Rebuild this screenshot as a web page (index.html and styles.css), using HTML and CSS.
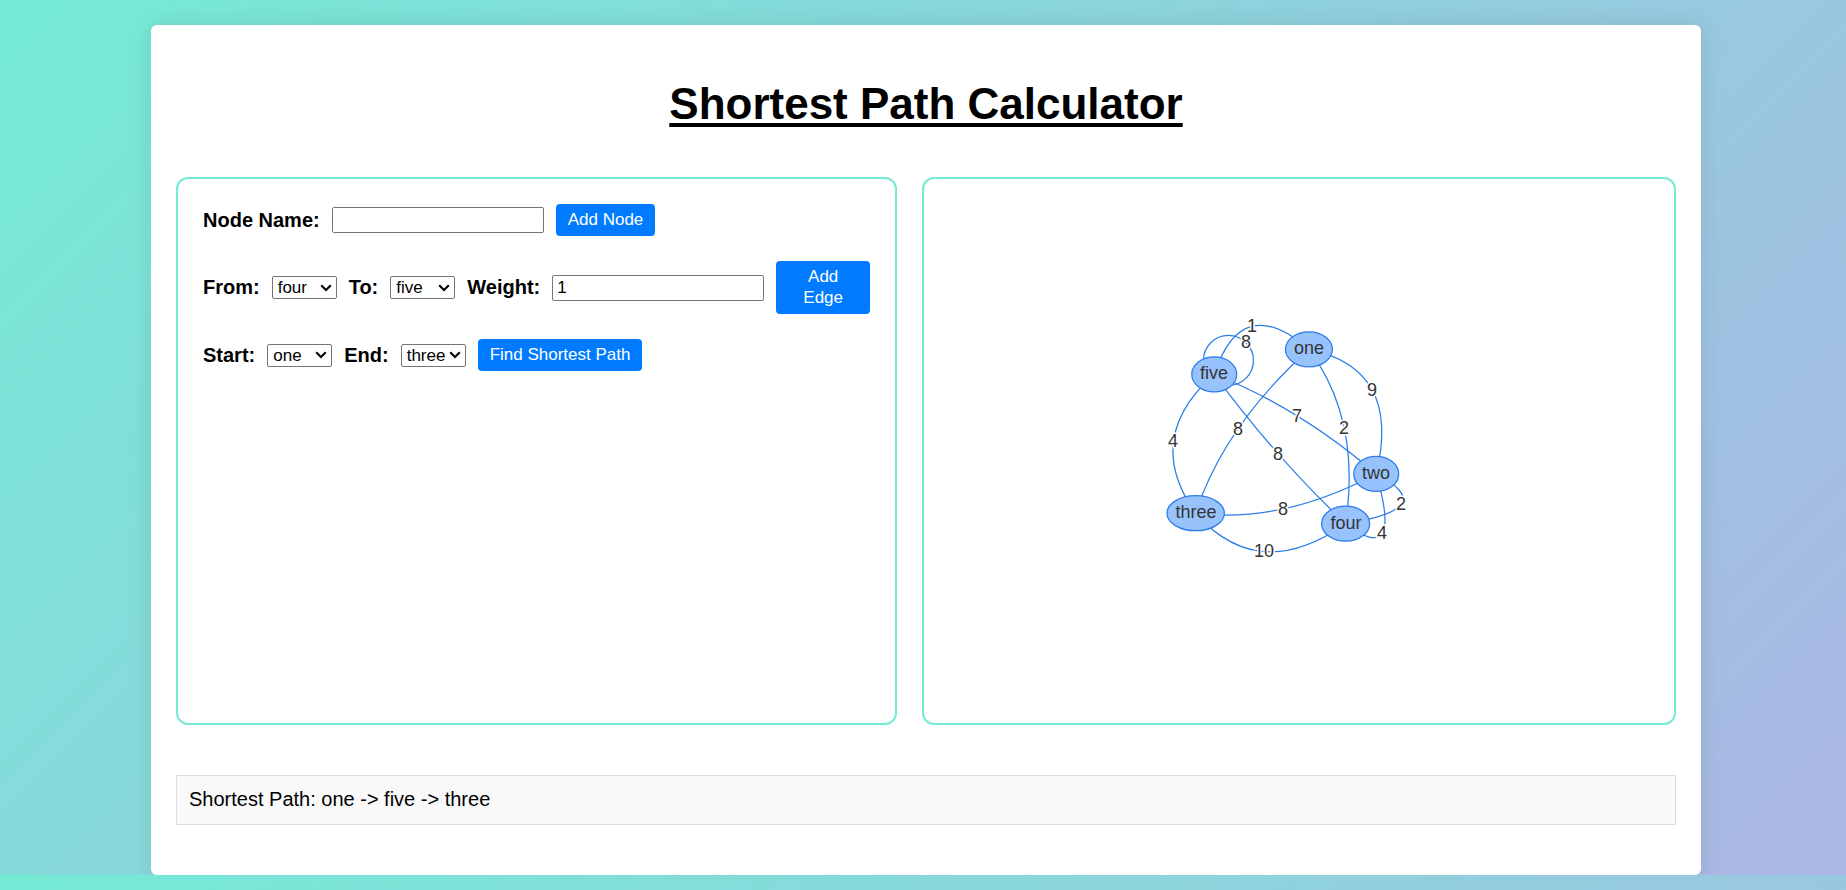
FILE: index.html
```html
<!DOCTYPE html>
<html lang="en">
<head>
<meta charset="utf-8">
<title>Shortest Path Calculator</title>
<link rel="stylesheet" href="styles.css">
</head>
<body>
<main class="container">
  <h1 class="title">Shortest Path Calculator</h1>
  <div class="panels">
    <section class="panel controls">
      <div class="row">
        <label for="node-name">Node Name:</label>
        <input class="field" type="text" id="node-name">
        <button class="btn" type="button">Add Node</button>
      </div>
      <div class="row">
        <label for="from">From:</label>
        <select class="pick" id="from"><option>one</option><option>two</option><option>three</option><option selected>four</option><option>five</option></select>
        <label for="to">To:</label>
        <select class="pick" id="to"><option>one</option><option>two</option><option>three</option><option>four</option><option selected>five</option></select>
        <label for="weight">Weight:</label>
        <input class="field" type="number" id="weight" value="1">
        <button class="btn" type="button">Add Edge</button>
      </div>
      <div class="row">
        <label for="start">Start:</label>
        <select class="pick" id="start"><option selected>one</option><option>two</option><option>three</option><option>four</option><option>five</option></select>
        <label for="end">End:</label>
        <select class="pick" id="end"><option>one</option><option>two</option><option selected>three</option><option>four</option><option>five</option></select>
        <button class="btn" type="button">Find Shortest Path</button>
      </div>
    </section>
    <section class="panel">
      <svg class="graph" viewBox="-226 -121 750 544" role="img" aria-label="Weighted graph">
        <g class="edges">
          <path d="M64.3 74.3Q91.7 -9 159 49.3"/>
          <path d="M159 49.3Q252 68.3 226.3 174"/>
          <path d="M159 49.3Q211.3 119.5 195.7 223.7"/>
          <path d="M159 49.3Q73.7 126.7 45.7 213.3"/>
          <path d="M64.3 74.3Q149.3 107.8 226.3 174"/>
          <path d="M64.3 74.3Q126.7 159 195.7 223.7"/>
          <path d="M64.3 74.3Q-7.7 138 45.7 213.3"/>
          <path d="M45.7 213.3Q130.7 224.3 226.3 174"/>
          <path d="M45.7 213.3Q108.7 284.8 195.7 223.7"/>
          <path d="M226.3 174Q292.3 208.5 195.7 223.7"/>
          <path d="M226.3 174Q253.7 267.8 195.7 223.7"/>
          <circle cx="78.5" cy="60.5" r="25"/>
        </g>
        <g class="nodes">
          <ellipse cx="159" cy="49.3" rx="23.5" ry="17.5"/>
          <ellipse cx="226.3" cy="174" rx="22.5" ry="17.5"/>
          <ellipse cx="45.7" cy="213.3" rx="28.7" ry="17.5"/>
          <ellipse cx="195.7" cy="223.7" rx="24" ry="17.5"/>
          <ellipse cx="64.3" cy="74.3" rx="22.5" ry="17.5"/>
        </g>
        <g class="names">
          <text x="159" y="54">one</text>
          <text x="226" y="179">two</text>
          <text x="46" y="218">three</text>
          <text x="196" y="229">four</text>
          <text x="64" y="79">five</text>
        </g>
        <g class="names weights">
          <text x="102" y="32">1</text>
          <text x="96" y="48">8</text>
          <text x="222" y="96">9</text>
          <text x="194" y="134">2</text>
          <text x="88" y="135">8</text>
          <text x="147" y="122">7</text>
          <text x="128" y="160">8</text>
          <text x="23" y="147">4</text>
          <text x="133" y="215">8</text>
          <text x="114" y="257">10</text>
          <text x="251" y="210">2</text>
          <text x="232" y="239">4</text>
        </g>
      </svg>
    </section>
  </div>
  <output class="result">Shortest Path: one -&gt; five -&gt; three</output>
</main>
</body>
</html>
```
FILE: styles.css
```css
* {
  box-sizing: border-box;
}

body {
  margin: 0;
  padding-left: 6px;
  font-family: "Liberation Sans", Arial, sans-serif;
  font-size: 20px;
  background: linear-gradient(135deg, #74ebd5, #acb6e5);
}

.container {
  max-width: 1550px;
  margin: 25px auto 0;
  padding: 25px 25px 50px;
  background: #fff;
  border-radius: 6px;
  box-shadow: 0 0 25px rgba(0, 0, 0, 0.1);
}

.title {
  margin: 0;
  padding: 29px 0 48px;
  font-size: 44px;
  line-height: 50px;
  text-align: center;
  text-decoration: underline;
  text-decoration-thickness: 4px;
  text-underline-offset: 4px;
}

.panels {
  display: grid;
  grid-template-columns: 22fr 23fr;
  gap: 25px;
}

.panel {
  border: 2px solid #74ebd5;
  border-radius: 12px;
}

.controls {
  display: flex;
  flex-direction: column;
  gap: 25px;
  padding: 25px;
}

.row {
  display: flex;
  align-items: center;
  gap: 12px;
  font-weight: bold;
}

.field,
.pick,
.btn {
  font-family: inherit;
  font-size: 17px;
}

.field {
  width: 212px;
  height: 26px;
  flex-shrink: 0;
  padding: 1px 4px;
  border: 1px solid #767676;
  border-radius: 2px;
}

.pick {
  appearance: none;
  width: 65px;
  height: 23px;
  flex-shrink: 0;
  padding: 0 0 0 5px;
  border: 1px solid #767676;
  border-radius: 2px;
  background: #fff url("data:image/svg+xml,%3Csvg xmlns='http://www.w3.org/2000/svg' width='12' height='8'%3E%3Cpath d='M1.2 1.2L6 6l4.8-4.8' fill='none' stroke='%23000' stroke-width='2'/%3E%3C/svg%3E") no-repeat right 4px center;
  color: #000;
}

.btn {
  padding: 5px 12px 6px;
  border: 0;
  border-radius: 4px;
  background: #007bff;
  color: #fff;
  line-height: 21px;
}

.graph {
  display: block;
  width: 100%;
}

.edges {
  fill: none;
  stroke: #2b7ce9;
  stroke-width: 1.25;
}

.nodes {
  fill: #97c2fc;
  stroke: #2b7ce9;
  stroke-width: 1.25;
}

.names {
  fill: #343434;
  font-size: 18px;
  text-anchor: middle;
}

.weights {
  stroke: #fff;
  stroke-width: 3;
  paint-order: stroke;
}

.result {
  display: block;
  margin-top: 50px;
  padding: 11px 12px 13px;
  border: 1px solid #ddd;
  background: #f9f9f9;
  line-height: 24px;
}
```
